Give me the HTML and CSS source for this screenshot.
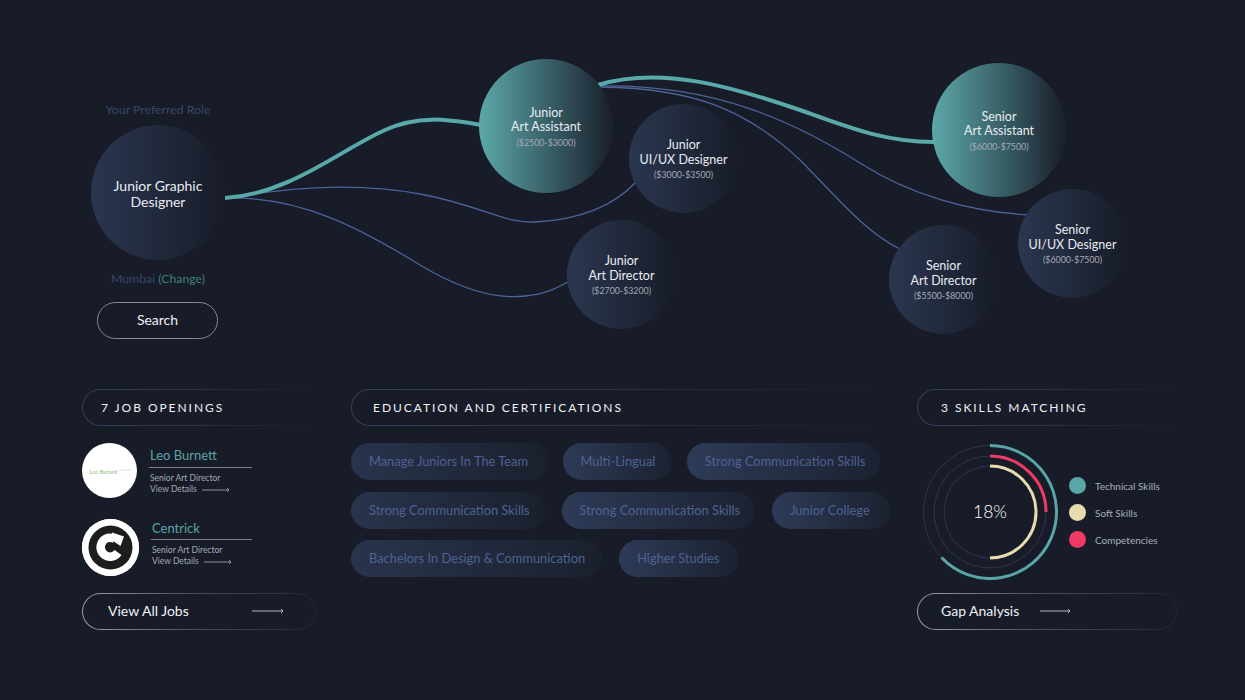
FILE: index.html
```html
<!DOCTYPE html>
<html lang="en">
<head>
    <meta charset="UTF-8">
    <meta name="viewport" content="width=device-width, initial-scale=1.0">
    <title>Career Path</title>
    <link rel="stylesheet" href="styles.css">
</head>
<body>
    <!-- Career map: nodes sit on a free canvas, curves are drawn under them -->
    <section class="map">
        <svg class="curves" width="1245" height="370" viewBox="0 0 1245 370" fill="none">
            <path class="curve" d="M225 198 C300 186 360 183 420 194 C480 205 505 224 535 222 C580 220 615 205 636 182"/>
            <path class="curve" d="M225 198 C300 196 360 228 420 265 C465 292 500 299 525 296 C545 294 555 289 568 282"/>
            <path class="curve" d="M600 86 C715 84 795 122 860 163 C910 195 970 212 1030 215"/>
            <path class="curve" d="M600 87 C690 88 745 108 800 160 C835 195 865 232 900 249"/>
            <path class="curve-main" d="M225 198 C290 194 340 150 385 130 C420 114 450 120 482 125"/>
            <path class="curve-main" d="M598 85 C660 66 730 86 800 110 C850 128 885 142 934 142"/>
        </svg>

        <div class="start">
            <p class="start-label">Your Preferred Role</p>
            <div class="node node-start"><span>Junior Graphic<br>Designer</span></div>
            <p class="start-label">Mumbai <span class="change">(Change)</span></p>
            <button class="search">Search</button>
        </div>

        <div class="node node-active junior-assistant">
            <span>Junior<br>Art Assistant</span><small>($2500-$3000)</small>
        </div>
        <div class="node junior-ux">
            <span>Junior<br>UI/UX Designer</span><small>($3000-$3500)</small>
        </div>
        <div class="node junior-director">
            <span>Junior<br>Art Director</span><small>($2700-$3200)</small>
        </div>
        <div class="node node-active senior-assistant">
            <span>Senior<br>Art Assistant</span><small>($6000-$7500)</small>
        </div>
        <div class="node senior-ux">
            <span>Senior<br>UI/UX Designer</span><small>($6000-$7500)</small>
        </div>
        <div class="node senior-director">
            <span>Senior<br>Art Director</span><small>($5500-$8000)</small>
        </div>
    </section>

    <section class="panels">
        <div class="panel">
            <h2 class="panel-title">7 Job Openings</h2>
            <div class="job">
                <div class="logo logo-leo">
                    <svg width="44" height="14" viewBox="0 0 44 14" fill="none">
                        <path d="M31 6.5 C35 6 38 6 43 5.5" stroke="#a9c99a" stroke-width=".5"/>
                        <path d="M36 2.5h.6M40 1.5h.6M34 10h.6M38 8.5h.6" stroke="#c5dcb9" stroke-width=".6"/>
                        <text x="1" y="10" class="leo-text">Leo Burnett</text>
                    </svg>
                </div>
                <div class="job-info">
                    <h3>Leo Burnett</h3>
                    <p>Senior Art Director</p>
                    <a class="details">View Details
                        <svg width="28" height="6" viewBox="0 0 28 6" fill="none"><path d="M0 3H27M25 1l2 2-2 2" stroke="#aeb3bf" stroke-width=".8"/></svg>
                    </a>
                </div>
            </div>
            <div class="job job-second">
                <div class="logo logo-centrick">
                    <svg width="57" height="57" viewBox="0 0 57 57" fill="none">
                        <circle cx="28.5" cy="28.5" r="28.5" fill="#fff"/>
                        <circle cx="28.5" cy="28.5" r="22" fill="#1d1d1d"/>
                        <path d="M36 33.5 A9.5 9.5 0 1 1 33 20" stroke="#fff" stroke-width="8.5"/>
                        <path d="M30 13.5 L42 17.5 L38.5 27 L31 22 Z" fill="#fff"/>
                    </svg>
                </div>
                <div class="job-info">
                    <h3>Centrick</h3>
                    <p>Senior Art Director</p>
                    <a class="details">View Details
                        <svg width="28" height="6" viewBox="0 0 28 6" fill="none"><path d="M0 3H27M25 1l2 2-2 2" stroke="#aeb3bf" stroke-width=".8"/></svg>
                    </a>
                </div>
            </div>
            <a class="action action-jobs">View All Jobs
                <svg width="32" height="6" viewBox="0 0 32 6" fill="none"><path d="M0 3H31M29 1l2 2-2 2" stroke="#c3c7d0" stroke-width=".9"/></svg>
            </a>
        </div>

        <div class="panel panel-wide">
            <h2 class="panel-title">Education and Certifications</h2>
            <div class="chips">
                <div class="chip-row chip-row-tight">
                    <span class="chip chip-dim">Manage Juniors In The Team</span>
                    <span class="chip chip-mid">Multi-Lingual</span>
                    <span class="chip chip-short">Strong Communication Skills</span>
                </div>
                <div class="chip-row">
                    <span class="chip chip-dim chip-short">Strong Communication Skills</span>
                    <span class="chip chip-short">Strong Communication Skills</span>
                    <span class="chip">Junior College</span>
                </div>
                <div class="chip-row">
                    <span class="chip chip-dim chip-mid">Bachelors In Design &amp; Communication</span>
                    <span class="chip">Higher Studies</span>
                </div>
            </div>
        </div>

        <div class="panel panel-skills">
            <h2 class="panel-title">3 Skills Matching</h2>
            <div class="skills">
                <div class="donut">
                    <svg width="136" height="136" viewBox="0 0 136 136" fill="none">
                        <circle class="ring" cx="68" cy="68" r="66.5"/>
                        <circle class="ring" cx="68" cy="68" r="56"/>
                        <circle class="ring" cx="68" cy="68" r="46"/>
                        <path d="M68 1.5 A66.5 66.5 0 1 1 19.5 113.5" stroke="#5aa5a8" stroke-width="3"/>
                        <path d="M68 12 A56 56 0 0 1 124 68" stroke="#ee3a64" stroke-width="3"/>
                        <path d="M68 22 A46 46 0 0 1 68 114" stroke="#e6dcae" stroke-width="3"/>
                    </svg>
                    <span class="percent">18%</span>
                </div>
                <ul class="legend">
                    <li><i class="dot dot-teal"></i>Technical Skills</li>
                    <li><i class="dot dot-cream"></i>Soft Skills</li>
                    <li><i class="dot dot-pink"></i>Competencies</li>
                </ul>
            </div>
            <a class="action action-gap">Gap Analysis
                <svg width="31" height="6" viewBox="0 0 31 6" fill="none"><path d="M0 3H30M28 1l2 2-2 2" stroke="#c3c7d0" stroke-width=".9"/></svg>
            </a>
        </div>
    </section>
</body>
</html>
```
FILE: styles.css
```css
* {
    box-sizing: border-box;
}

body {
    font-family: 'Lato', 'Liberation Sans', sans-serif;
    background-color: #171c28;
    color: #e8ecf2;
    margin: 0;
    width: 1245px;
    height: 700px;
    overflow: hidden;
}

/* Map */
.map {
    position: relative;
    height: 389px;
}

.curves {
    position: absolute;
    top: 0;
    left: 0;
}

.curve {
    stroke: #4d6499;
    stroke-width: 1.3;
}

.curve-main {
    stroke: #5aa9aa;
    stroke-width: 4;
}

.node {
    position: absolute;
    width: 109px;
    height: 109px;
    padding-top: 3px;
    border-radius: 50%;
    display: flex;
    flex-direction: column;
    justify-content: center;
    align-items: center;
    text-align: center;
    font-size: 12.5px;
    line-height: 14.5px;
    background: linear-gradient(90deg, #2b3650, #181d29 96%);
}

.node small {
    display: block;
    font-size: 8.8px;
    line-height: 14px;
    margin-top: 1px;
    color: #a4aab7;
}

.node-active {
    width: 134px;
    height: 134px;
    background: linear-gradient(90deg, #5ca8a9, #1b232f 96%);
}

.junior-assistant { left: 479px; top: 59px; }
.junior-ux { left: 629px; top: 104px; }
.junior-director { left: 567px; top: 220px; }
.senior-assistant { left: 932px; top: 63px; }
.senior-ux { left: 1018px; top: 189px; }
.senior-director { left: 889px; top: 225px; }

.start {
    position: absolute;
    left: 82px;
    top: 102px;
    width: 152px;
    display: flex;
    flex-direction: column;
    align-items: center;
}

.start-label {
    margin: 0;
    font-size: 12.3px;
    line-height: 16px;
    color: #3b4766;
}

.change {
    color: #3f7f81;
}

.node-start {
    position: static;
    width: 134px;
    height: 135px;
    margin: 7px 0 11px;
    font-size: 14px;
    line-height: 16px;
}

.search {
    width: 121px;
    height: 37px;
    margin: 15px 0 0 -1px;
    padding-bottom: 3px;
    border: 1px solid #858a98;
    border-radius: 19px;
    background: none;
    color: #eef1f5;
    font-family: inherit;
    font-size: 14px;
}

/* Bottom panels */
.panels {
    display: flex;
    padding-left: 82px;
}

.panel {
    width: 269px;
}

.panel-wide {
    width: 566px;
}

.panel-skills {
    width: 260px;
}

.panel-title {
    height: 37px;
    margin: 0;
    padding-left: 18px;
    border: 1px solid transparent;
    border-right: none;
    border-radius: 19px 0 0 19px;
    background: linear-gradient(#171c28, #171c28) padding-box, linear-gradient(90deg, #36415f, #2a3348 45%, #171c28 100%) border-box;
    font-size: 12px;
    font-weight: 400;
    line-height: 35px;
    letter-spacing: 1.95px;
    text-transform: uppercase;
    color: #eef1f5;
}

.panel:first-child .panel-title {
    width: 232px;
}

.panel-wide .panel-title {
    width: 530px;
    padding-left: 21px;
}

.panel-skills .panel-title {
    padding-left: 23px;
}

/* Jobs */
.job {
    display: flex;
    align-items: flex-start;
    margin-top: 17px;
}

.job-second {
    margin-top: 21px;
}

.logo {
    flex: none;
    width: 55px;
    height: 55px;
    border-radius: 50%;
    background-color: #fff;
    display: flex;
    justify-content: center;
    align-items: center;
}

.logo-centrick {
    width: 57px;
    height: 57px;
}

.leo-text {
    font-family: 'Liberation Serif', serif;
    font-style: italic;
    font-size: 6px;
    fill: #86b473;
}

.job-info {
    width: 103px;
    margin-left: 12px;
    padding-top: 4px;
}

.job-info h3 {
    margin: 0 0 5px;
    padding: 0 1px 4px;
    border-bottom: 1px solid #7b808e;
    font-size: 13px;
    font-weight: 400;
    line-height: 16px;
    color: #5aa5a8;
}

.job-second .job-info {
    margin-left: 12px;
    padding-top: 1px;
    width: 101px;
}

.job-second h3 {
    padding-bottom: 3px;
}

.job-info p {
    margin: 0;
    font-size: 8.5px;
    line-height: 11px;
    padding-left: 1px;
    color: #a4aab7;
}

.details {
    display: flex;
    align-items: center;
    gap: 5px;
    padding-left: 1px;
    font-size: 8.5px;
    line-height: 11px;
    color: #a4aab7;
}

.action {
    display: flex;
    align-items: center;
    height: 37px;
    padding-bottom: 2px;
    border: 1px solid transparent;
    border-radius: 19px;
    background: linear-gradient(#171c28, #171c28) padding-box, linear-gradient(90deg, #9a9fac, #4a5060 45%, #1f2532) border-box;
    font-size: 14px;
    color: #eef1f5;
}

.action-jobs {
    width: 234px;
    margin-top: 17px;
    padding-left: 25px;
    gap: 63px;
}

.action-gap {
    width: 260px;
    margin-top: 13px;
    padding-left: 23px;
    gap: 21px;
}

/* Chips */
.chips {
    margin-top: 17px;
    display: flex;
    flex-direction: column;
    gap: 11.5px;
}

.chip-row {
    display: flex;
    gap: 17px;
}

.chip-row-tight {
    gap: 14.5px;
}

.chip {
    height: 37px;
    padding: 0 20px 0 18px;
    border-radius: 19px;
    background: linear-gradient(90deg, #2e3b57, #1b2130);
    font-size: 12.85px;
    line-height: 37px;
    color: #4e6392;
    white-space: nowrap;
}

.chip-mid {
    padding-right: 17px;
}

.chip-short {
    padding-right: 15px;
}

.chip-dim {
    background: linear-gradient(90deg, #29344d, #1a202d);
}

/* Skills */
.skills {
    display: flex;
    align-items: center;
    margin: 18px 0 0 5px;
}

.donut {
    position: relative;
    width: 136px;
    height: 136px;
}

.ring {
    stroke: #2c3650;
    stroke-width: 1;
}

.percent {
    position: absolute;
    top: 0;
    left: 0;
    width: 100%;
    text-align: center;
    font-size: 17.5px;
    font-weight: 300;
    line-height: 136px;
    color: #fff;
}

.legend {
    list-style: none;
    margin: 1px 0 0 11px;
    padding: 0;
    display: flex;
    flex-direction: column;
    gap: 10px;
}

.legend li {
    display: flex;
    align-items: center;
    gap: 9px;
    height: 17px;
    font-size: 10px;
    color: #a9afbc;
}

.dot {
    width: 17px;
    height: 17px;
    border-radius: 50%;
}

.dot-teal { background-color: #5aa5a8; }
.dot-cream { background-color: #e6dcae; }
.dot-pink { background-color: #ee3a64; }
```
